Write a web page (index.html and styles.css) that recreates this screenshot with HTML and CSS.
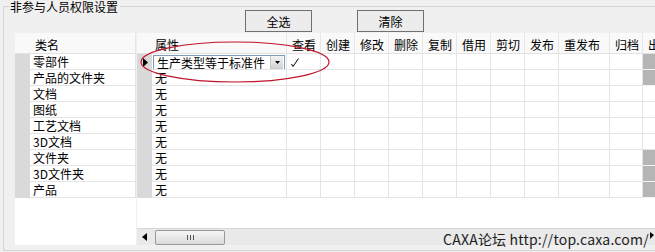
FILE: index.html
```html
<!DOCTYPE html>
<html lang="zh-CN">
<head>
  <meta charset="UTF-8" />
  <title>非参与人员权限设置</title>
  <link rel="stylesheet" href="styles.css">
</head>
<body>
  <div class="grupo">
    <div class="legenda">非参与人员权限设置</div>
    <div class="barra-botoes">
      <button class="botao">全选</button>
      <button class="botao">清除</button>
    </div>

    <div class="grade">
      <!-- painel fixo: nomes das classes -->
      <div class="painel painel-esq">
        <div class="cab">
          <div class="cel-rh"></div>
          <div class="cc c-nome">类名</div>
        </div>
        <div class="linha"><div class="cel-rh"></div><div class="cel c-nome">零部件</div></div>
        <div class="linha"><div class="cel-rh"></div><div class="cel c-nome">产品的文件夹</div></div>
        <div class="linha"><div class="cel-rh"></div><div class="cel c-nome">文档</div></div>
        <div class="linha"><div class="cel-rh"></div><div class="cel c-nome">图纸</div></div>
        <div class="linha"><div class="cel-rh"></div><div class="cel c-nome">工艺文档</div></div>
        <div class="linha"><div class="cel-rh"></div><div class="cel c-nome">3D文档</div></div>
        <div class="linha"><div class="cel-rh"></div><div class="cel c-nome">文件夹</div></div>
        <div class="linha"><div class="cel-rh"></div><div class="cel c-nome">3D文件夹</div></div>
        <div class="linha"><div class="cel-rh"></div><div class="cel c-nome">产品</div></div>
      </div>

      <!-- painel das permissoes -->
      <div class="painel painel-dir">
        <div class="cab">
          <div class="cel-rh"></div>
          <div class="cc c-attr">属性</div>
          <div class="cc c-op">查看</div>
          <div class="cc c-op">创建</div>
          <div class="cc c-op">修改</div>
          <div class="cc c-op">删除</div>
          <div class="cc c-op">复制</div>
          <div class="cc c-op">借用</div>
          <div class="cc c-op">剪切</div>
          <div class="cc c-op">发布</div>
          <div class="cc c-larga">重发布</div>
          <div class="cc c-op33">归档</div>
          <div class="cc c-ult">出库</div>
        </div>
        <div id="linhas"></div>
        <div class="vazio"></div>
        <div class="rolagem">
          <svg class="seta-esq" width="5" height="8" viewBox="0 0 5 8"><polygon points="5,0 0,4 5,8" fill="#000"/></svg>
          <div class="polegar"><span></span><span></span><span></span></div>
        </div>
      </div>
    </div>
  </div>

  <svg class="elipse" width="655" height="252" viewBox="0 0 655 252">
    <ellipse cx="235" cy="62" rx="94" ry="20" fill="none" stroke="#c0142a" stroke-width="1.2"/>
  </svg>

  <div class="marca">CAXA论坛 http://top.caxa.com/<svg width="4" height="7" viewBox="0 0 4 7"><polygon points="0,0 4,3 0,7" fill="#000"/></svg></div>

  <script>
    const linhas = document.getElementById("linhas");
    const cinzas = [0, 1, 6, 7, 8];
    const colunas = ["c-op", "c-op", "c-op", "c-op", "c-op", "c-op", "c-op", "c-op", "c-larga", "c-op33"];

    for (let i = 0; i < 9; i++) {
      const linha = document.createElement("div");
      linha.className = "linha";

      const rh = document.createElement("div");
      rh.className = "cel-rh";
      if (i === 0) {
        rh.innerHTML = '<svg class="seta-lin" width="5" height="9" viewBox="0 0 5 9"><polygon points="0,0 5,4.5 0,9" fill="#000"/></svg>';
      }
      linha.appendChild(rh);

      const attr = document.createElement("div");
      attr.className = "cel c-attr";
      if (i === 0) {
        attr.innerHTML = '<div class="combo"><span>生产类型等于标准件</span><div class="combo-btn"><svg width="5" height="3" viewBox="0 0 5 3"><polygon points="0,0 5,0 2.5,3" fill="#000"/></svg></div></div>';
      } else {
        attr.textContent = "无";
      }
      linha.appendChild(attr);

      colunas.forEach((c, j) => {
        const cel = document.createElement("div");
        cel.className = "cel " + c;
        if (i === 0 && j === 0) {
          cel.innerHTML = '<svg class="visto" width="8" height="9" viewBox="0 0 8 9"><polyline points="0.5,6 2,8.5 7.5,0.5" fill="none" stroke="#000" stroke-width="1"/></svg>';
        }
        linha.appendChild(cel);
      });

      const ult = document.createElement("div");
      ult.className = "cel c-ult" + (cinzas.includes(i) ? " cinza" : "");
      linha.appendChild(ult);

      linhas.appendChild(linha);
    }
  </script>
</body>
</html>
```

FILE: styles.css
```css
html, body {
  margin: 0;
  width: 655px;
  height: 252px;
  overflow: hidden;
}
body {
  position: relative;
  box-sizing: border-box;
  padding: 6px 0 0 3px;
  background: #f0f0f0;
  font-family: "Noto Sans CJK SC", "Liberation Sans", sans-serif;
  font-size: 12px;
  color: #000;
}
.grupo {
  box-sizing: border-box;
  width: 680px;
  height: 245px;
  border: 1px solid #d3d3d3;
}
.legenda {
  width: fit-content;
  margin: -7px 0 0 6px;
  height: 14px;
  line-height: 14px;
  background: #f0f0f0;
  padding-right: 2px;
}
.barra-botoes {
  display: flex;
  gap: 45px;
  margin-top: -4px;
  padding-left: 241px;
}
.botao {
  width: 67px;
  height: 22px;
  padding: 0;
  border: 1px solid #707070;
  background: #ececec;
  font-family: inherit;
  font-size: 12px;
  color: #000;
}
.grade {
  display: flex;
  gap: 1px;
  margin: 1px 0 0 11px;
  height: 212px;
}
.painel {
  display: flex;
  flex-direction: column;
  background: #fff;
  overflow: hidden;
}
.painel-esq { width: 121px; flex: none; }
.painel-dir { flex: 1; }

.cab {
  display: flex;
  height: 21px;
  flex: none;
  background: #f9f9f9;
  border-bottom: 1px solid #e2e2e2;
  box-sizing: border-box;
}
.cc {
  box-sizing: border-box;
  flex: none;
  padding: 3px 0 0 5px;
  line-height: 17px;
  border-right: 1px solid #e6e6e6;
  white-space: nowrap;
  overflow: hidden;
}
.linha {
  display: flex;
  height: 16px;
  flex: none;
}
.cel-rh {
  flex: none;
  width: 15px;
  background: #d9d9d9;
  position: relative;
}
.cab .cel-rh { background: transparent; }
.cel {
  box-sizing: border-box;
  flex: none;
  height: 16px;
  padding-left: 3px;
  line-height: 15px;
  border-right: 1px solid #e4e4e4;
  border-bottom: 1px solid #e4e4e4;
  white-space: nowrap;
  overflow: hidden;
}
.c-nome { width: 106px; }
.c-attr { width: 135px; padding-left: 3px; }
.c-op { width: 34px; }
.c-larga { width: 51px; }
.c-op33 { width: 33px; }
.c-ult { width: 40px; }
.cel.cinza {
  background: #b5b5b5;
  border-bottom-color: #f4f4f4;
}
.seta-lin {
  display: block;
  margin: 4px 0 0 6px;
}
.combo {
  display: flex;
  box-sizing: border-box;
  width: 132px;
  height: 15px;
  margin: 1px 0 0 -2px;
  border: 1px solid #7f9db9;
  background: #fff;
  line-height: 13px;
  padding-left: 3px;
}
.combo span { flex: 1; }
.combo-btn {
  display: flex;
  align-items: center;
  justify-content: center;
  width: 12px;
  margin: 0 1px 0 0;
  background: linear-gradient(#f4f4f4, #cfcfcf);
  border-left: 1px solid #c8c8c8;
}
.visto {
  display: block;
  margin: 4px 0 0 1px;
}
.vazio {
  flex: 1;
}
.rolagem {
  display: flex;
  align-items: center;
  height: 17px;
  flex: none;
  box-sizing: border-box;
  background: #e9e9e9;
  border-top: 1px solid #d6d6d6;
}
.seta-esq {
  margin-left: 5px;
}
.polegar {
  display: flex;
  justify-content: center;
  align-items: center;
  gap: 2px;
  box-sizing: border-box;
  width: 70px;
  height: 15px;
  margin-left: 8px;
  border: 1px solid #979797;
  border-radius: 2px;
  background: linear-gradient(#f6f6f6, #dadada);
}
.polegar span {
  width: 1px;
  height: 5px;
  background: #555;
}
.elipse {
  position: absolute;
  left: 0;
  top: 0;
  pointer-events: none;
}
.marca {
  position: absolute;
  left: 443px;
  top: 229px;
  font-size: 14px;
  letter-spacing: 0.2px;
  line-height: 20px;
  color: #1e1e1e;
  white-space: nowrap;
}
.marca svg {
  margin-left: 1px;
  vertical-align: 6px;
}
```
